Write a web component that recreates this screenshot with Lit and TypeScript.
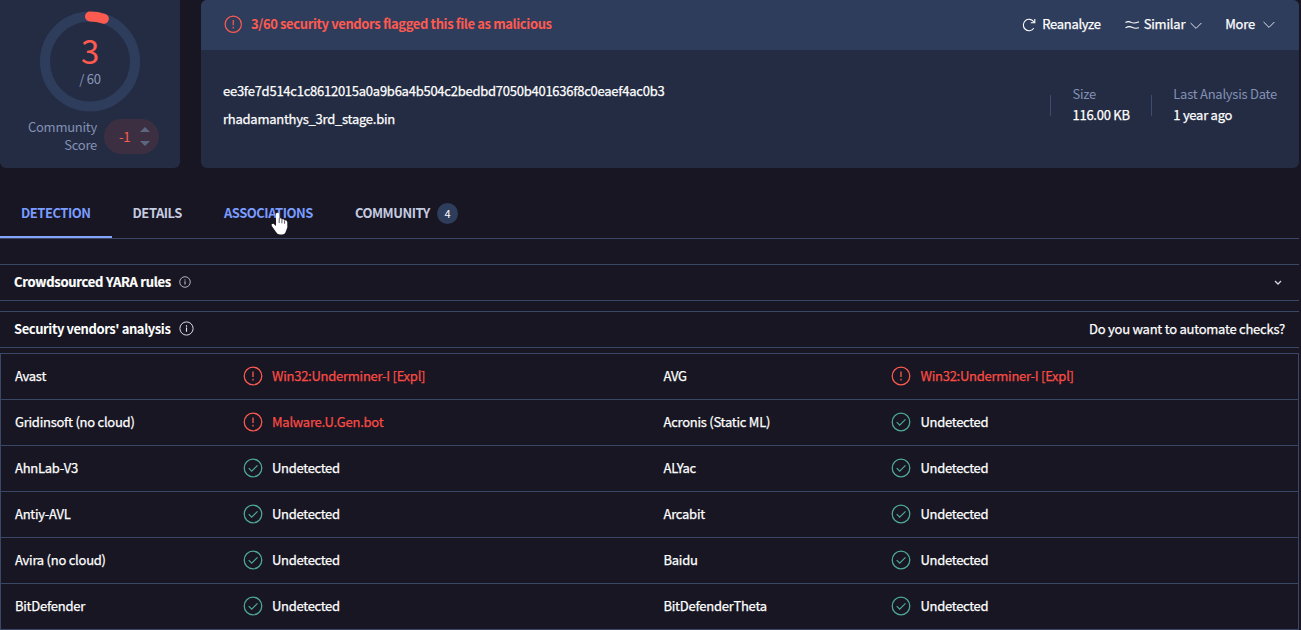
import { LitElement, html, css, svg } from "lit";
import { customElement, property } from "lit/decorators.js";

@customElement("status-icon")
class StatusIcon extends LitElement {
  @property() kind = "ok";
  @property({ type: Number }) size = 20;
  static styles = css`
    :host { display: block; flex: none; }
    svg { display: block; fill: none; stroke: currentColor; stroke-linecap: butt; }
    .bad { color: #ff5a50; }
    .ok { color: #4fa996; }
    .info { color: #e4e6ec; }
  `;
  render() {
    const mark =
      this.kind === "bad"
        ? svg`<path d="M10 5.4v5.6M10 12.8v1.7" stroke-width="1.3"/>`
        : this.kind === "ok"
          ? svg`<path d="M5.7 10.1l3 3 5.8-5.8" stroke-width="1.2"/>`
          : svg`<path d="M10 8.8v5.4M10 5.8v1.7" stroke-width="1.5"/>`;
    return html`<svg class=${this.kind} width=${this.size} height=${this.size} viewBox="0 0 20 20">
      <circle cx="10" cy="10" r="8.8" stroke-width="1.25" />${mark}
    </svg>`;
  }
}

type Verdict = [vendor: string, kind: string, result: string];

const U = "Undetected";
const verdicts: Verdict[] = [
  ["Avast", "bad", "Win32:Underminer-I [Expl]"],
  ["AVG", "bad", "Win32:Underminer-I [Expl]"],
  ["Gridinsoft (no cloud)", "bad", "Malware.U.Gen.bot"],
  ["Acronis (Static ML)", "ok", U],
  ["AhnLab-V3", "ok", U],
  ["ALYac", "ok", U],
  ["Antiy-AVL", "ok", U],
  ["Arcabit", "ok", U],
  ["Avira (no cloud)", "ok", U],
  ["Baidu", "ok", U],
  ["BitDefender", "ok", U],
  ["BitDefenderTheta", "ok", U],
];

@customElement("app-root")
class AppRoot extends LitElement {
  static styles = css`
    :host {
      display: block; box-sizing: border-box; width: 100vw; height: 630px; overflow: hidden;
      padding-right: 2px; background: #171622; color: #fff;
      font: 400 13px/18px "Noto Sans CJK SC", "Noto Sans", sans-serif;
      letter-spacing: -.25px;
    }
    * { box-sizing: border-box; }
    svg { display: block; flex: none; }
    .summary { display: flex; gap: 21px; height: 168px; }
    .score { width: 180px; background: #242c43; border-radius: 0 0 6px 6px; padding-top: 11px; }
    .dial { display: grid; width: 100px; height: 101px; margin: 0 auto; place-items: center; }
    .dial > * { grid-area: 1 / 1; }
    .dial-text { text-align: center; color: #8a97b8; padding-bottom: 4px; }
    .dial-num { color: #ff5a50; font-size: 33px; line-height: 36px; padding-bottom: 2px; }
    .community { display: flex; align-items: center; justify-content: flex-end; padding: 6px 21px 0 0; gap: 7px; }
    .community-label { text-align: right; color: #8391b5; }
    .pill { display: flex; align-items: center; width: 55px; height: 35px; border-radius: 18px; background: #3d2f42; color: #ff5a50; padding-left: 15px; gap: 10px; }
    .pill-num { padding-top: 1px; }
    .file { flex: 1; background: #242c43; border-radius: 6px; overflow: hidden; }
    .file-head { display: flex; align-items: center; height: 50px; background: #2f3d5c; padding: 0 24px 0 23px; }
    .file-head status-icon { margin-bottom: 1px; }
    .flag { flex: 1; color: #ff5a50; font-weight: 700; padding: 0 0 2px 8.5px; letter-spacing: -.385px; }
    .strong { -webkit-text-stroke: .25px currentColor; }
    .action { display: flex; align-items: center; letter-spacing: -.2px; }
    .label { padding-bottom: 2px; }
    .a1 { gap: 6px; letter-spacing: -.28px; } .a2 { gap: 4px; margin-left: 24px; } .a3 { gap: 8px; margin-left: 23px; }
    .low { padding: 2px 0 0 1px; }
    .high { padding-bottom: 1px; }
    .file-body { display: flex; align-items: center; height: 118px; padding: 0 22px; }
    .names { flex: 1; padding-bottom: 8px; line-height: 28px; }
    .stat { display: flex; align-items: center; gap: 21px; }
    .stat + .stat { margin-left: 21.500px; }
    .rule { width: 1px; height: 21px; background: #3d4c70; margin-bottom: 7px; }
    .pair { padding-bottom: 11px; line-height: 21px; }
    .key { color: #8391b5; }
    .tabs { display: flex; height: 71px; border-bottom: 1px solid #3a4766; font-weight: 700; color: #c5cbe0; letter-spacing: -.48px; }
    .tab { display: flex; align-items: center; margin-top: 19px; padding: 2px 21px 0; gap: 7px; border-bottom: 2px solid transparent; }
    .active { color: #7a9cff; border-bottom-color: #83a5ff; }
    .hover { color: #7a9cff; position: relative; }
    .count { width: 21px; height: 21px; margin-top: 1px; border-radius: 50%; background: #2f3d5c; color: #fff; font-size: 11px; font-weight: 400; line-height: 21px; text-align: center; letter-spacing: 0; }
    .cursor { position: absolute; left: 68px; top: 25px; }
    .panel { display: flex; align-items: center; height: 37px; border: solid #3a4766; border-width: 1px 0; padding: 0 14px; gap: 8px; }
    .panel-title { font-weight: 700; letter-spacing: -.42px; padding-bottom: 2px; }
    .panel status-icon { margin-bottom: 2px; }
    .yara .panel-title { letter-spacing: -.26px; -webkit-text-stroke: .2px currentColor; }
    .grow { flex: 1; }
    .yara { margin-top: 25px; padding-right: 17px; }
    .vendors { margin-top: 10px; gap: 9px; }
    .ask { padding-bottom: 2px; letter-spacing: -.24px; }
    .table { display: grid; grid-template-columns: 1fr 1fr; margin-top: 5px; border: 1px solid #3a4766; border-width: 1px 1px 0; }
    .cell { display: grid; grid-template-columns: 228px 1fr; align-items: center; height: 46px; padding: 0 0 1px 14px; border-bottom: 1px solid #3a4766; }
    .cell:nth-child(even) { grid-template-columns: 227.5px 1fr; }
    .verdict { display: flex; align-items: center; gap: 9px; }
    .cell:nth-child(even) .verdict { gap: 9.5px; }
    .t-bad { color: #fa4b45; }
    .t-ok { letter-spacing: -.3px; }
  `;

  chevron() {
    return html`<svg width="12" height="8" viewBox="0 0 12 8" fill="none" stroke="#dde2ee"><path d="M.6 1l5.4 5.4L11.4 1" /></svg>`;
  }

  render() {
    return html`
      <section class="summary">
        <div class="score">
          <div class="dial">
            <svg width="100" height="101" viewBox="0 -.5 100 101" fill="none">
              <circle cx="50" cy="50" r="45" stroke="#2f3d5c" stroke-width="10" />
              <path d="M50 5A45 45 0 0 1 63.9 7.2" stroke="#ff5a50" stroke-width="10" stroke-linecap="round" />
            </svg>
            <div class="dial-text"><div class="dial-num">3</div><div>/ 60</div></div>
          </div>
          <div class="community">
            <div class="community-label">Community<br />Score</div>
            <div class="pill">
              <span class="pill-num">-1</span>
              <svg width="10" height="21" viewBox="0 0 10 21" fill="#5c667e"><path d="M0 6l5-5 5 5zM0 15h10l-5 5z" /></svg>
            </div>
          </div>
        </div>
        <div class="file">
          <div class="file-head">
            <status-icon kind="bad" .size=${18.5}></status-icon>
            <div class="flag">3/60 security vendors flagged this file as malicious</div>
            <div class="action a1 strong">
              <svg width="14" height="14" viewBox="0 0 14 14" fill="none" stroke="#fff" stroke-width="1.1"><path d="M11.800 10.200A5.700 5.700 0 1 1 11.900 4M12.800 1v3.700H8.800" /></svg>
              <span class="label">Reanalyze</span>
            </div>
            <div class="action a2 strong">
              <svg width="15" height="10" viewBox="0 0 15 10" fill="none" stroke="#fff" stroke-width="1.1"><path d="M.5 2.400Q3.500.8 6.200 2.400T14 1.700M.5 7.900Q4 5.700 7 7.300t7 .5" /></svg>
              <span class="label">Similar</span> <span class="low">${this.chevron()}</span>
            </div>
            <div class="action a3 strong"><span class="label">More</span> <span class="high">${this.chevron()}</span></div>
          </div>
          <div class="file-body">
            <div class="names">
              <div class="strong">ee3fe7d514c1c8612015a0a9b6a4b504c2bedbd7050b401636f8c0eaef4ac0b3</div>
              <div class="strong">rhadamanthys_3rd_stage.bin</div>
            </div>
            <div class="stat"><div class="rule"></div><div class="pair"><div class="key">Size</div><div class="strong">116.00 KB</div></div></div>
            <div class="stat"><div class="rule"></div><div class="pair"><div class="key">Last Analysis Date</div><div class="strong">1 year ago</div></div></div>
          </div>
        </div>
      </section>

      <nav class="tabs">
        <div class="tab active">DETECTION</div>
        <div class="tab">DETAILS</div>
        <div class="tab hover">
          ASSOCIATIONS
          <svg class="cursor" width="17" height="24" viewBox="0 0 17 24">
            <path fill="#fff" d="M5 2.200Q5 .8 6.500.8T8 2.200V6.500Q10.500 6 10.800 7.300 13.300 6.800 13.600 8.300 16.200 8 16.300 10.500V15.500L14.800 19.500Q14 22.500 11 22.500H9Q6.500 22.500 5 20L.8 14Q0 11.600 2.500 11.800L5 14z" />
            <path stroke="#171622" stroke-width=".7" d="M8.200 6.500v4.500M10.900 7.300v4M13.600 8.300v3.500" />
          </svg>
        </div>
        <div class="tab">COMMUNITY <span class="count">4</span></div>
      </nav>

      <section class="panel yara">
        <div class="panel-title">Crowdsourced YARA rules</div>
        <status-icon kind="info" .size=${12}></status-icon>
        <div class="grow"></div>
        <svg width="8" height="6" viewBox="0 0 8 6" fill="none" stroke="#d5d8e0" stroke-width="1.300"><path d="M1 1l3 3 3-3" /></svg>
      </section>

      <section class="panel vendors">
        <div class="panel-title">Security vendors' analysis</div>
        <status-icon kind="info" .size=${15}></status-icon>
        <div class="grow"></div>
        <div class="ask strong">Do you want to automate checks?</div>
      </section>

      <section class="table">
        ${verdicts.map(
          ([vendor, kind, result]) => html`<div class="cell">
            <div class="strong">${vendor}</div>
            <div class="verdict"><status-icon kind=${kind}></status-icon><span class="strong t-${kind}">${result}</span></div>
          </div>`,
        )}
      </section>
    `;
  }
}
